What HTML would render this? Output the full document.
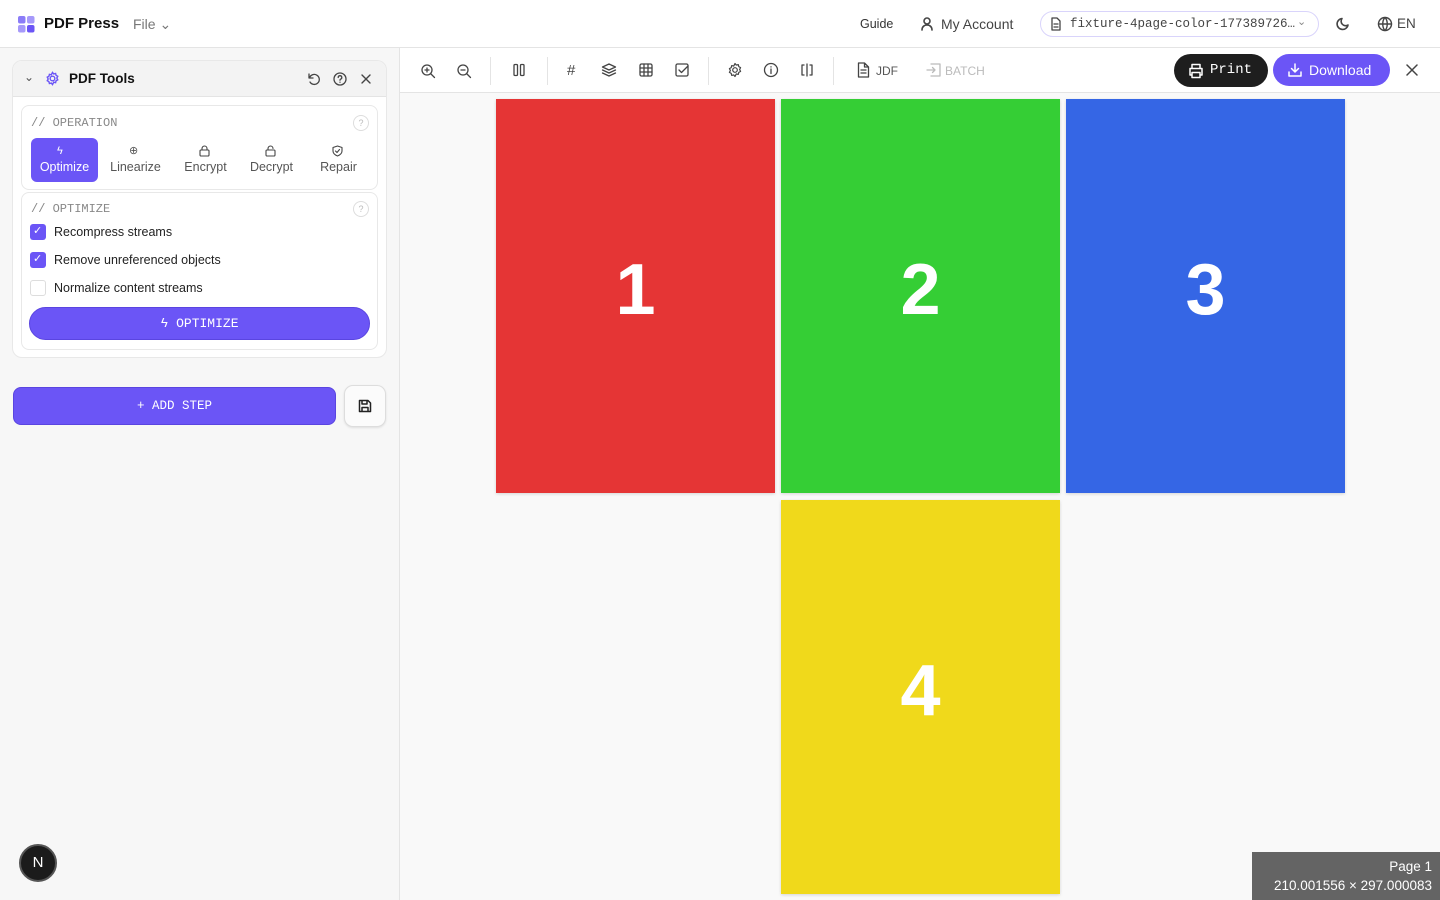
<!DOCTYPE html>
<html><head><meta charset="utf-8"><style>
*{box-sizing:border-box;margin:0;padding:0}
body{width:1440px;height:900px;overflow:hidden;background:#f9f9f9;font-family:"Liberation Sans",sans-serif;color:#222;position:relative}
.mono{font-family:"Liberation Mono",monospace}
.top{position:absolute;left:0;top:0;width:1440px;height:48px;background:#fff;border-bottom:1px solid #e4e4e4}
.abs{position:absolute}
svg{display:block}
.side{position:absolute;left:0;top:48px;width:400px;height:852px;background:#f7f7f7;border-right:1px solid #e4e4e4}
.tb{position:absolute;left:400px;top:48px;width:1040px;height:45px;background:#fff;border-bottom:1px solid #e4e4e4}
.ic{position:absolute;stroke:#444;fill:none;stroke-width:1.6;stroke-linecap:round;stroke-linejoin:round}
.page{position:absolute;width:279px;height:394px;color:#fff;font-weight:bold;font-size:72px;display:flex;align-items:center;justify-content:center;padding-bottom:12px;box-shadow:0 1px 3px rgba(0,0,0,.15)}
.sep{position:absolute;top:9px;width:1px;height:28px;background:#e4e4e4}
.cb{position:absolute;left:30px;width:16px;height:16px;border-radius:3px;background:#6b55f6}
.lbl{position:absolute;left:54px;font-size:12.5px;color:#222}
</style></head><body>
<div class="top">
 <svg class="abs" style="left:18px;top:16px" width="17" height="17"><rect x="0" y="0" width="7.5" height="7.5" rx="2" fill="#8b7cf8"/><rect x="9" y="0" width="7.5" height="7.5" rx="2" fill="#a699fa"/><rect x="0" y="9" width="7.5" height="7.5" rx="2" fill="#a699fa"/><rect x="9" y="9" width="7.5" height="7.5" rx="2" fill="#6b55f6"/></svg>
 <div class="abs" style="left:44px;top:15px;font-size:15px;font-weight:bold;color:#111">PDF Press</div>
 <div class="abs" style="left:133px;top:16px;font-size:14px;color:#777">File ⌄</div>
 <div class="abs" style="left:860px;top:17px;font-size:12.5px;color:#333">Guide</div>
 <svg class="ic" style="left:920px;top:16px" width="14" height="15" viewBox="0 0 14 15"><circle cx="7" cy="5" r="3"/><path d="M2 14c0-3 2-5 5-5s5 2 5 5"/></svg>
 <div class="abs" style="left:941px;top:16px;font-size:14px;color:#444">My Account</div>
 <div class="abs" style="left:1040px;top:11px;width:279px;height:26px;border:1px solid #d9d4fb;border-radius:13px"></div>
 <svg class="ic" style="left:1050px;top:17px;stroke-width:1.3" width="12" height="14" viewBox="0 0 12 14"><path d="M2 1h5l3 3v9H2z M4 7h4M4 10h4"/></svg>
 <div class="abs mono" style="left:1070px;top:17px;font-size:12.5px;color:#444">fixture-4page-color-177389726…</div>
 <div class="abs" style="left:1297px;top:15px;font-size:11px;color:#888">⌄</div>
 <svg class="ic" style="left:1336px;top:16px" width="15" height="15" viewBox="0 0 15 15"><path d="M12 9A5.5 5.5 0 1 1 6 2.5a4.5 4.5 0 0 0 6 6.5z"/></svg>
 <svg class="ic" style="left:1377px;top:16px;stroke-width:1.4" width="16" height="16" viewBox="0 0 16 16"><circle cx="8" cy="8" r="6.5"/><path d="M1.5 8h13M8 1.5c3 3 3 10 0 13M8 1.5c-3 3-3 10 0 13"/></svg>
 <div class="abs" style="left:1397px;top:16px;font-size:13.5px;color:#444">EN</div>
</div>

<div class="side">
 <div class="abs" style="left:12px;top:12px;width:375px;height:298px;background:#fff;border:1px solid #e8e8e8;border-radius:10px;overflow:hidden">
  <div class="abs" style="left:0;top:0;width:375px;height:36px;background:#f3f3f3;border-bottom:1px solid #e4e4e4"></div>
  <div class="abs" style="left:11px;top:9px;font-size:12px;color:#555">⌄</div>
  <svg class="abs" style="left:32px;top:10px;fill:none;stroke:#6b55f6;stroke-width:1.5" width="15" height="15" viewBox="0 0 16 16"><circle cx="8" cy="8" r="2.5"/><path d="M8 1.5l1.3 1.6 2-.5.5 2 1.8 1-1 1.9 1 1.9-1.8 1-.5 2-2-.5L8 14.5l-1.3-1.6-2 .5-.5-2-1.8-1 1-1.9-1-1.9 1.8-1 .5-2 2 .5z"/></svg>
  <div class="abs" style="left:56px;top:10px;font-size:13.5px;font-weight:bold;color:#111">PDF Tools</div>
  <svg class="ic" style="left:294px;top:11px;stroke-width:1.3" width="14" height="14" viewBox="0 0 14 14"><path d="M2 2v4h4M2.5 6A5 5 0 1 1 3 10"/></svg>
  <svg class="ic" style="left:320px;top:11px;stroke-width:1.3" width="14" height="14" viewBox="0 0 14 14"><circle cx="7" cy="7" r="6"/><path d="M5.2 5.5a1.8 1.8 0 1 1 2.3 1.7c-.4.2-.5.5-.5 1M7 10.2v.1"/></svg>
  <svg class="ic" style="left:347px;top:12px;stroke-width:1.4" width="12" height="12" viewBox="0 0 12 12"><path d="M2 2l8 8M10 2l-8 8"/></svg>
  <div class="abs" style="left:8px;top:44px;width:357px;height:85px;border:1px solid #e8e8e8;border-radius:8px"></div>
  <div class="abs mono" style="left:18px;top:55px;font-size:12px;color:#888">// OPERATION</div>
  <div class="abs" style="left:340px;top:54px;width:16px;height:16px;border:1px solid #ddd;border-radius:50%;font-size:9px;color:#bbb;text-align:center;line-height:14px">?</div>
  <div class="abs" style="left:18px;top:77px;width:67px;height:44px;background:#6b55f6;border-radius:6px"></div>
  <div class="abs" style="left:18px;top:99px;width:67px;text-align:center;font-size:12.5px;color:#fff">Optimize</div>
  <div class="abs" style="left:44px;top:84px;color:#fff;font-size:11px">ϟ</div>
  <div class="abs" style="left:90px;top:99px;width:65px;text-align:center;font-size:12.5px;color:#555">Linearize</div>
  <div class="abs" style="left:116px;top:83px;color:#555;font-size:11px">⊕</div>
  <div class="abs" style="left:160px;top:99px;width:65px;text-align:center;font-size:12.5px;color:#555">Encrypt</div>
  <svg class="ic" style="left:186px;top:84px;stroke-width:1.1" width="11" height="12" viewBox="0 0 11 12"><rect x="1" y="5" width="9" height="6" rx="1"/><path d="M3 5V3.5a2.5 2.5 0 0 1 5 0V5"/></svg>
  <div class="abs" style="left:226px;top:99px;width:65px;text-align:center;font-size:12.5px;color:#555">Decrypt</div>
  <svg class="ic" style="left:252px;top:84px;stroke-width:1.1" width="11" height="12" viewBox="0 0 11 12"><rect x="1" y="5" width="9" height="6" rx="1"/><path d="M3 5V3.5a2.5 2.5 0 0 1 5 0"/></svg>
  <div class="abs" style="left:293px;top:99px;width:65px;text-align:center;font-size:12.5px;color:#555">Repair</div>
  <svg class="ic" style="left:319px;top:84px;stroke-width:1.1" width="11" height="12" viewBox="0 0 11 12"><path d="M5.5 1L10 2.5V6c0 2.5-2 4-4.5 5C3 10 1 8.5 1 6V2.5z M3.5 6l1.5 1.5 2.5-3"/></svg>
  <div class="abs" style="left:8px;top:131px;width:357px;height:158px;border:1px solid #e8e8e8;border-radius:8px"></div>
  <div class="abs mono" style="left:18px;top:141px;font-size:12px;color:#888">// OPTIMIZE</div>
  <div class="abs" style="left:340px;top:140px;width:16px;height:16px;border:1px solid #ddd;border-radius:50%;font-size:9px;color:#bbb;text-align:center;line-height:14px">?</div>
 </div>
 <div class="cb" style="top:176px"></div><div class="abs" style="left:33px;top:176px;color:#fff;font-size:11px">✓</div>
 <div class="lbl" style="top:177px">Recompress streams</div>
 <div class="cb" style="top:204px"></div><div class="abs" style="left:33px;top:204px;color:#fff;font-size:11px">✓</div>
 <div class="lbl" style="top:205px">Remove unreferenced objects</div>
 <div class="cb" style="top:232px;background:#fff;border:1px solid #ddd"></div>
 <div class="lbl" style="top:233px">Normalize content streams</div>
 <div class="abs mono" style="left:29px;top:259px;width:341px;height:33px;background:#6b55f6;border:1px solid #5a45e0;border-radius:17px;color:#fff;font-size:13px;text-align:center;line-height:31px">ϟ OPTIMIZE</div>
 <div class="abs mono" style="left:13px;top:339px;width:323px;height:38px;background:#6b55f6;border:1px solid #5a45e0;border-radius:8px;color:#fff;font-size:12.5px;text-align:center;line-height:36px">+ ADD STEP</div>
 <div class="abs" style="left:344px;top:337px;width:42px;height:42px;background:#fbfbfb;border:1px solid #ddd;border-radius:9px;box-shadow:0 1px 2px rgba(0,0,0,.1)"></div>
 <svg class="ic" style="left:358px;top:351px;stroke:#222;stroke-width:1.5" width="14" height="14" viewBox="0 0 14 14"><path d="M1.5 1.5h8.5l2.5 2.5v8.5h-11z M4 1.5v3.5h5V1.5 M4 12.5V8.5h6v4"/></svg>
 <div class="abs" style="left:19px;top:796px;width:38px;height:38px;border-radius:50%;background:#1b1b1b;border:2px solid #555;color:#fff;font-size:15px;text-align:center;line-height:34px">N</div>
</div>

<div class="tb">
 <svg class="ic" style="left:20px;top:15px;stroke-width:1.3" width="16" height="16" viewBox="0 0 16 16"><circle cx="7" cy="7" r="5"/><path d="M11 11l3.5 3.5M5 7h4M7 5v4"/></svg>
 <svg class="ic" style="left:56px;top:15px;stroke-width:1.3" width="16" height="16" viewBox="0 0 16 16"><circle cx="7" cy="7" r="5"/><path d="M11 11l3.5 3.5M5 7h4"/></svg>
 <div class="sep" style="left:90px"></div>
 <svg class="ic" style="left:112px;top:15px;stroke-width:1.3" width="14" height="14" viewBox="0 0 14 14"><rect x="2" y="1.5" width="3.5" height="11" rx="1"/><rect x="8.5" y="1.5" width="3.5" height="11" rx="1"/></svg>
 <div class="sep" style="left:147px"></div>
 <div class="abs" style="left:167px;top:14px;font-size:15px;color:#444">#</div>
 <svg class="ic" style="left:201px;top:14px;stroke-width:1.3" width="16" height="16" viewBox="0 0 16 16"><path d="M8 2l6.5 3L8 8 1.5 5z M1.5 8L8 11l6.5-3 M1.5 11L8 14l6.5-3"/></svg>
 <svg class="ic" style="left:239px;top:15px;stroke-width:1.3" width="14" height="14" viewBox="0 0 14 14"><rect x="1" y="1" width="12" height="12" rx="1.5"/><path d="M1 5h12M1 9h12M5 1v12M9 1v12"/></svg>
 <svg class="ic" style="left:275px;top:15px;stroke-width:1.3" width="14" height="14" viewBox="0 0 14 14"><rect x="1" y="1" width="12" height="12" rx="1.5"/><path d="M4 7l2.5 2.5L13 3"/></svg>
 <div class="sep" style="left:308px"></div>
 <svg class="ic" style="left:327px;top:14px;stroke-width:1.2" width="16" height="16" viewBox="0 0 16 16"><circle cx="8" cy="8" r="2.3"/><path d="M8 1.5l1.3 1.6 2-.5.5 2 1.8 1-1 1.9 1 1.9-1.8 1-.5 2-2-.5L8 14.5l-1.3-1.6-2 .5-.5-2-1.8-1 1-1.9-1-1.9 1.8-1 .5-2 2 .5z"/></svg>
 <svg class="ic" style="left:363px;top:14px;stroke-width:1.3" width="16" height="16" viewBox="0 0 16 16"><circle cx="8" cy="8" r="6.5"/><path d="M8 7v4.5M8 4.8v.2"/></svg>
 <svg class="ic" style="left:399px;top:15px;stroke-width:1.3" width="16" height="14" viewBox="0 0 16 14"><path d="M5 2H3v10h2M11 2h2v10h-2M8 1v12"/></svg>
 <div class="sep" style="left:433px"></div>
 <svg class="ic" style="left:457px;top:14px;stroke-width:1.3" width="13" height="16" viewBox="0 0 13 16"><path d="M1.5 1h6l4 4v10h-10z M7.5 1v4h4 M4 8h5M4 11h5"/></svg>
 <div class="abs" style="left:476px;top:16px;font-size:12px;color:#555">JDF</div>
 <svg class="ic" style="left:526px;top:15px;stroke:#bbb;stroke-width:1.3" width="16" height="14" viewBox="0 0 16 14"><path d="M5 1H14v12H5 M1 7h8M6.5 4.5L9 7l-2.5 2.5"/></svg>
 <div class="abs" style="left:545px;top:16px;font-size:12px;color:#bbb">BATCH</div>
 <div class="abs" style="left:774px;top:6px;width:94px;height:33px;background:#1e1e1e;border-radius:17px"></div>
 <div class="abs mono" style="left:810px;top:14px;font-size:14px;color:#fff;line-height:17px">Print</div>
 <svg class="ic" style="left:788px;top:15px;stroke:#fff;stroke-width:1.5" width="16" height="16" viewBox="0 0 16 16"><path d="M4 5V1.5h8V5 M4 12H2V5.5h12V12h-2 M4 9.5h8v5H4z"/></svg>
 <div class="abs" style="left:873px;top:6px;width:117px;height:32px;background:#6b55f6;border-radius:16px;color:#fff;font-size:14px;line-height:32px;padding-left:36px">Download</div>
 <svg class="ic" style="left:887px;top:14px;stroke:#fff;stroke-width:1.5" width="16" height="16" viewBox="0 0 16 16"><path d="M8 2v8M4.5 6.5L8 10l3.5-3.5 M2 10v4h12v-4"/></svg>
 <svg class="ic" style="left:1006px;top:16px;stroke-width:1.5" width="12" height="12" viewBox="0 0 12 12"><path d="M1 1l10 10M11 1L1 11"/></svg>
</div>

<div class="page" style="left:496px;top:99px;background:#e53535">1</div>
<div class="page" style="left:781px;top:99px;background:#35ce35">2</div>
<div class="page" style="left:1066px;top:99px;background:#3566e5">3</div>
<div class="page" style="left:781px;top:500px;background:#f0d91b">4</div>

<div class="abs" style="left:1252px;top:852px;width:188px;height:48px;background:#646464;color:#fff;font-size:13.5px;text-align:right;padding:5px 8px 0 0;line-height:19px">Page 1<br>210.001556 × 297.000083</div>
</body></html>
